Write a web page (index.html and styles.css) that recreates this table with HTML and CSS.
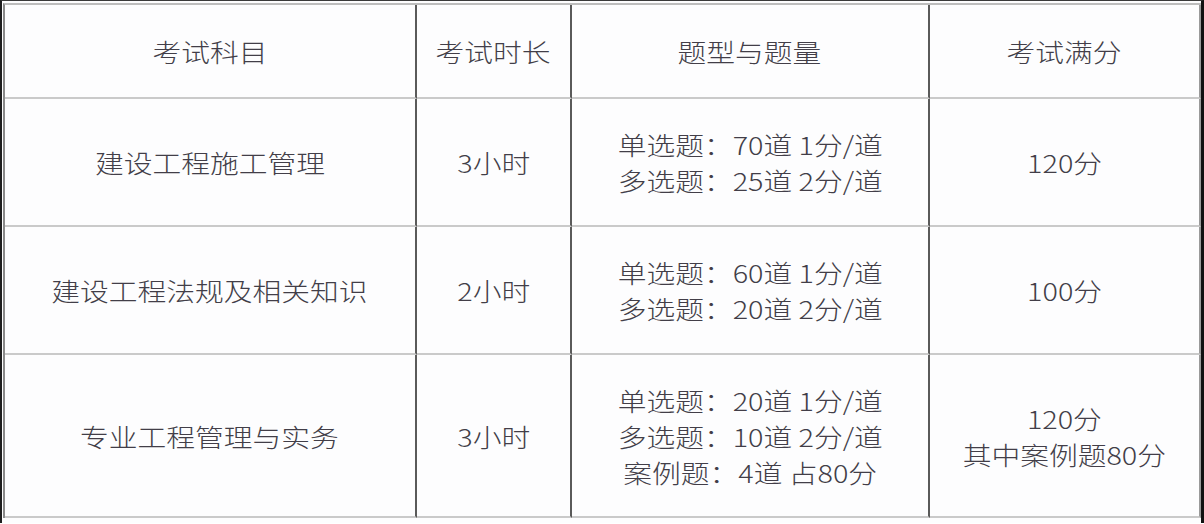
FILE: index.html
```html
<!DOCTYPE html>
<html lang="zh-CN">
<head>
<meta charset="utf-8">
<title>考试科目</title>
<link rel="stylesheet" href="styles.css">
</head>
<body>
<div class="frame">
  <div class="grid">
    <div class="cell head"><span class="t">考试科目</span></div>
    <div class="cell head"><span class="t">考试时长</span></div>
    <div class="cell head"><span class="t">题型与题量</span></div>
    <div class="cell head last"><span class="t">考试满分</span></div>

    <div class="cell r1"><span class="t">建设工程施工管理</span></div>
    <div class="cell r1"><span class="t">3小时</span></div>
    <div class="cell r1"><span class="t"><span class="ln">单选题：70道 1分/道</span><span class="ln">多选题：25道 2分/道</span></span></div>
    <div class="cell r1 last"><span class="t">120分</span></div>

    <div class="cell r2"><span class="t">建设工程法规及相关知识</span></div>
    <div class="cell r2"><span class="t">2小时</span></div>
    <div class="cell r2"><span class="t"><span class="ln">单选题：60道 1分/道</span><span class="ln">多选题：20道 2分/道</span></span></div>
    <div class="cell r2 last"><span class="t">100分</span></div>

    <div class="cell r3"><span class="t">专业工程管理与实务</span></div>
    <div class="cell r3"><span class="t">3小时</span></div>
    <div class="cell r3"><span class="t"><span class="ln">单选题：20道 1分/道</span><span class="ln">多选题：10道 2分/道</span><span class="ln">案例题：4道 占80分</span></span></div>
    <div class="cell r3 last"><span class="t"><span class="ln">120分</span><span class="ln">其中案例题80分</span></span></div>
  </div>
</div>
</body>
</html>
```

FILE: styles.css
```css
html, body {
  margin: 0;
  padding: 0;
  background: #ffffff;
}

body {
  width: 1204px;
  height: 524px;
  overflow: hidden;
  font-family: "Noto Sans CJK SC", "Noto Sans", sans-serif;
  font-weight: 300;
  color: #423e48;
}

.frame {
  border-left: 2px solid #1e1e1e;
  border-right: 3px solid #111111;
  border-top: 1px solid #3a3a3a;
  padding: 2px 0 0 1px;
  height: 523px;
  box-sizing: border-box;
  background: #fdfdfe;
}

.grid {
  display: grid;
  grid-template-columns: 412px 155px 358px 271px;
  grid-template-rows: 94px 128px 128px 163px;
  border-top: 2px solid #bdbdbd;
  border-left: 2px solid #8a8a8a;
}

.cell {
  box-sizing: border-box;
  border-right: 2px solid #5a5a5a;
  border-bottom: 2px solid #cacaca;
  display: flex;
  align-items: center;
  justify-content: center;
  text-align: center;
  font-size: 25px;
  line-height: 36px;
}

.cell.last {
  border-right-color: #9a9a9a;
}

.t {
  display: inline-block;
  transform: scaleX(1.15);
  white-space: nowrap;
}

.ln {
  display: block;
}
```
